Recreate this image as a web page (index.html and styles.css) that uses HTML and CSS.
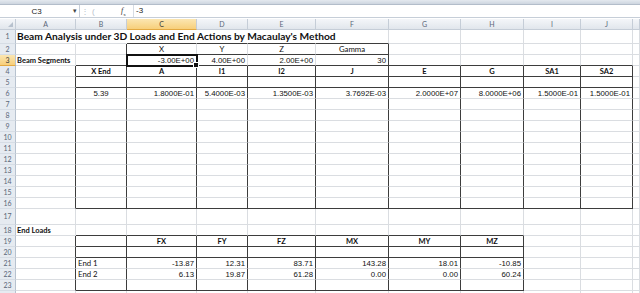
FILE: index.html
```html
<!DOCTYPE html>
<html lang="en">
<head>
    <meta charset="UTF-8">
    <title>Beam Analysis</title>
    <link rel="stylesheet" href="styles.css">
</head>
<body>
    <!-- bottom edge of the ribbon -->
    <div class="ribbon"></div>

    <!-- Formula bar -->
    <div class="fbar">
        <div class="namebox"><span class="ref">C3</span><span class="dd">&#9662;</span></div>
        <div class="fbtns"><span class="grip">&#8942;</span><span class="paren">(</span></div>
        <div class="fx"><i>f</i><sub>x</sub></div>
        <div class="fval">-3</div>
    </div>

    <table class="sheet">
        <colgroup>
            <col style="width:16px"><col style="width:60px"><col style="width:51px"><col style="width:70px">
            <col style="width:51px"><col style="width:68px"><col style="width:73px"><col style="width:72px">
            <col style="width:63px"><col style="width:57px"><col style="width:52px"><col style="width:7px">
        </colgroup>
        <tr class="hdr">
            <th class="corner"><span class="tri"></span></th>
            <th>A</th><th>B</th><th class="on">C</th><th>D</th><th>E</th><th>F</th><th>G</th><th>H</th><th>I</th><th>J</th><th></th>
        </tr>
        <tr class="tall">
            <th>1</th>
            <td class="nr title">Beam Analysis under 3D Loads and End Actions by Macaulay's Method</td>
            <td class="nr"></td><td class="nr b"></td><td class="nr b"></td><td class="nr b"></td><td class="b"></td>
            <td></td><td></td><td></td><td></td><td></td>
        </tr>
        <tr>
            <th>2</th>
            <td></td><td class="r"></td>
            <td class="b c cal">X</td><td class="b c cal">Y</td><td class="b c cal">Z</td><td class="b r c cal">Gamma</td>
            <td></td><td></td><td></td><td></td><td></td>
        </tr>
        <tr>
            <th class="on">3</th>
            <td class="lab">Beam Segments</td><td class="r b"></td>
            <td class="b n sel">-3.00E+00</td><td class="b n">4.00E+00</td><td class="b n">2.00E+00</td><td class="b r n">30</td>
            <td class="b"></td><td class="b"></td><td class="b"></td><td class="b"></td><td></td>
        </tr>
        <tr>
            <th>4</th>
            <td class="r"></td>
            <td class="r b h">X End</td><td class="r b h">A</td><td class="r b h">I1</td><td class="r b h">I2</td><td class="r b h">J</td>
            <td class="r b h">E</td><td class="r b h">G</td><td class="r b h">SA1</td><td class="r b h">SA2</td><td></td>
        </tr>
        <tr>
            <th>5</th>
            <td class="r"></td>
            <td class="r b"></td><td class="r b"></td><td class="r b"></td><td class="r b"></td><td class="r b"></td>
            <td class="r b"></td><td class="r b"></td><td class="r b"></td><td class="r b"></td><td></td>
        </tr>
        <tr>
            <th>6</th>
            <td class="r"></td>
            <td class="r c">5.39</td><td class="r n">1.8000E-01</td><td class="r n">5.4000E-03</td><td class="r n">1.3500E-03</td><td class="r n">3.7692E-03</td>
            <td class="r n">2.0000E+07</td><td class="r n">8.0000E+06</td><td class="r n">1.5000E-01</td><td class="r n">1.5000E-01</td><td></td>
        </tr>
        <tr><th>7</th><td class="r"></td><td class="r"></td><td class="r"></td><td class="r"></td><td class="r"></td><td class="r"></td><td class="r"></td><td class="r"></td><td class="r"></td><td class="r"></td><td></td></tr>
        <tr><th>8</th><td class="r"></td><td class="r"></td><td class="r"></td><td class="r"></td><td class="r"></td><td class="r"></td><td class="r"></td><td class="r"></td><td class="r"></td><td class="r"></td><td></td></tr>
        <tr><th>9</th><td class="r"></td><td class="r"></td><td class="r"></td><td class="r"></td><td class="r"></td><td class="r"></td><td class="r"></td><td class="r"></td><td class="r"></td><td class="r"></td><td></td></tr>
        <tr><th>10</th><td class="r"></td><td class="r"></td><td class="r"></td><td class="r"></td><td class="r"></td><td class="r"></td><td class="r"></td><td class="r"></td><td class="r"></td><td class="r"></td><td></td></tr>
        <tr><th>11</th><td class="r"></td><td class="r"></td><td class="r"></td><td class="r"></td><td class="r"></td><td class="r"></td><td class="r"></td><td class="r"></td><td class="r"></td><td class="r"></td><td></td></tr>
        <tr><th>12</th><td class="r"></td><td class="r"></td><td class="r"></td><td class="r"></td><td class="r"></td><td class="r"></td><td class="r"></td><td class="r"></td><td class="r"></td><td class="r"></td><td></td></tr>
        <tr><th>13</th><td class="r"></td><td class="r"></td><td class="r"></td><td class="r"></td><td class="r"></td><td class="r"></td><td class="r"></td><td class="r"></td><td class="r"></td><td class="r"></td><td></td></tr>
        <tr><th>14</th><td class="r"></td><td class="r"></td><td class="r"></td><td class="r"></td><td class="r"></td><td class="r"></td><td class="r"></td><td class="r"></td><td class="r"></td><td class="r"></td><td></td></tr>
        <tr><th>15</th><td class="r"></td><td class="r"></td><td class="r"></td><td class="r"></td><td class="r"></td><td class="r"></td><td class="r"></td><td class="r"></td><td class="r"></td><td class="r"></td><td></td></tr>
        <tr>
            <th>16</th>
            <td class="r"></td>
            <td class="r b"></td><td class="r b"></td><td class="r b"></td><td class="r b"></td><td class="r b"></td>
            <td class="r b"></td><td class="r b"></td><td class="r b"></td><td class="r b"></td><td></td>
        </tr>
        <tr class="gap"><th>17</th><td></td><td></td><td></td><td></td><td></td><td></td><td></td><td></td><td></td><td></td><td></td></tr>
        <tr>
            <th>18</th>
            <td class="lab">End Loads</td>
            <td class="b"></td><td class="b"></td><td class="b"></td><td class="b"></td><td class="b"></td><td class="b"></td><td class="b"></td>
            <td></td><td></td><td></td>
        </tr>
        <tr>
            <th>19</th>
            <td class="r"></td>
            <td class="r b"></td><td class="r b h">FX</td><td class="r b h">FY</td><td class="r b h">FZ</td>
            <td class="r b h">MX</td><td class="r b h">MY</td><td class="r b h">MZ</td>
            <td></td><td></td><td></td>
        </tr>
        <tr>
            <th>20</th>
            <td class="r"></td>
            <td class="r b"></td><td class="r b"></td><td class="r b"></td><td class="r b"></td><td class="r b"></td><td class="r b"></td><td class="r b"></td>
            <td></td><td></td><td></td>
        </tr>
        <tr>
            <th>21</th>
            <td class="r"></td>
            <td class="r cal">End 1</td><td class="r n">-13.87</td><td class="r n">12.31</td><td class="r n">83.71</td>
            <td class="r n">143.28</td><td class="r n">18.01</td><td class="r n">-10.85</td>
            <td></td><td></td><td></td>
        </tr>
        <tr>
            <th>22</th>
            <td class="r"></td>
            <td class="r cal">End 2</td><td class="r n">6.13</td><td class="r n">19.87</td><td class="r n">61.28</td>
            <td class="r n">0.00</td><td class="r n">0.00</td><td class="r n">60.24</td>
            <td></td><td></td><td></td>
        </tr>
        <tr>
            <th>23</th>
            <td class="r"></td>
            <td class="r b"></td><td class="r b"></td><td class="r b"></td><td class="r b"></td><td class="r b"></td><td class="r b"></td><td class="r b"></td>
            <td></td><td></td><td></td>
        </tr>
        <tr><th></th><td></td><td></td><td></td><td></td><td></td><td></td><td></td><td></td><td></td><td></td><td></td></tr>
    </table>
</body>
</html>
```

FILE: styles.css
```css
body {
    margin: 0;
    background: #fff;
    font-family: "Liberation Sans", Arial, sans-serif;
    overflow: hidden;
}

/* Ribbon edge and formula bar */
.ribbon {
    height: 4px;
    background: linear-gradient(#e4e9ef, #cdd5df);
    border-bottom: 1px solid #b3bdca;
}

.fbar {
    display: flex;
    align-items: center;
    height: 12px;
    border-bottom: 1px solid #c6ced8;
    font-size: 8px;
    color: #222;
}

.namebox {
    width: 80px;
    height: 12px;
    display: flex;
    align-items: center;
    border-right: 1px solid #c6ced8;
    box-sizing: border-box;
}

.namebox .ref {
    flex: 1;
    text-align: center;
    font-family: "Liberation Sans", sans-serif;
}

.namebox .dd {
    font-size: 7px;
    color: #444;
    padding-right: 2px;
}

.fbtns {
    width: 40px;
    display: flex;
    gap: 3px;
    color: #b8c0ca;
    padding-left: 1px;
}

.fx {
    width: 12px;
    font-family: "Liberation Serif", serif;
    font-size: 8px;
    color: #333;
}

.fx sub {
    font-size: 5px;
}

.fval {
    padding-left: 2px;
    border-left: 1px solid #d6dce4;
    height: 12px;
    line-height: 12px;
}

/* Grid */
.sheet {
    border-collapse: separate;
    border-spacing: 0;
    table-layout: fixed;
    width: 640px;
    margin-top: 1px;
}

.sheet tr {
    height: 11px;
}

.sheet tr.tall {
    height: 14px;
}

.sheet tr.gap {
    height: 16px;
}

.sheet tr.hdr {
    height: 11px;
}

.sheet td {
    padding: 0 2px;
    height: 11px;
    box-sizing: border-box;
    border-right: 1px solid #dadde1;
    border-bottom: 1px solid #dadde1;
    font-size: 7.8px;
    line-height: 9px;
    vertical-align: bottom;
    white-space: nowrap;
    overflow: visible;
    color: #111;
}

.sheet th {
    padding: 0;
    background: linear-gradient(#f4f6f9, #e1e6ec);
    border-right: 1px solid #c5cdd7;
    border-bottom: 1px solid #c5cdd7;
    font-family: Lato, "Open Sans", sans-serif;
    font-weight: normal;
    font-size: 7px;
    line-height: 9px;
    color: #5a6779;
    text-align: center;
    box-sizing: border-box;
}

.sheet tr:not(.hdr) th {
    background: #e6ebf1;
    border-right-color: #b7c2cf;
    border-bottom-color: #d6dde5;
}

.sheet th.on,
.sheet tr:not(.hdr) th.on {
    background: linear-gradient(#fbe6b2, #f7cf7b);
    border-bottom-color: #e3a942;
    color: #3b3b3b;
}

.corner {
    position: relative;
}

.corner .tri {
    position: absolute;
    right: 2px;
    bottom: 2px;
    border-left: 5px solid transparent;
    border-bottom: 5px solid #b7c1cd;
}

/* Cell styles */
.nr { border-right-color: transparent !important; }
.sheet td.r { border-right-color: #3d3d3d; }
.sheet td.b { border-bottom-color: #3d3d3d; }

.n { text-align: right; }
.c { text-align: center; }

.cal {
    font-family: Lato, "Open Sans", sans-serif;
}

.sheet td.h {
    font-family: Lato, "Open Sans", sans-serif;
    font-weight: bold;
    text-align: center;
    font-size: 7.5px;
}

.sheet td.lab {
    font-family: Lato, "Open Sans", sans-serif;
    font-weight: bold;
    font-size: 7.5px;
    padding-left: 1px;
}

.sheet td.title {
    font-family: Lato, "Open Sans", sans-serif;
    font-weight: bold;
    font-size: 10.2px;
    line-height: 13px;
    padding-left: 1px;
}

.sheet td.sel {
    position: relative;
    outline: 2px solid #111;
    outline-offset: -1px;
}

.sheet td.sel::after {
    content: "";
    position: absolute;
    right: -3px;
    bottom: -3px;
    width: 4px;
    height: 4px;
    background: #111;
    border: 1px solid #fff;
}
```
